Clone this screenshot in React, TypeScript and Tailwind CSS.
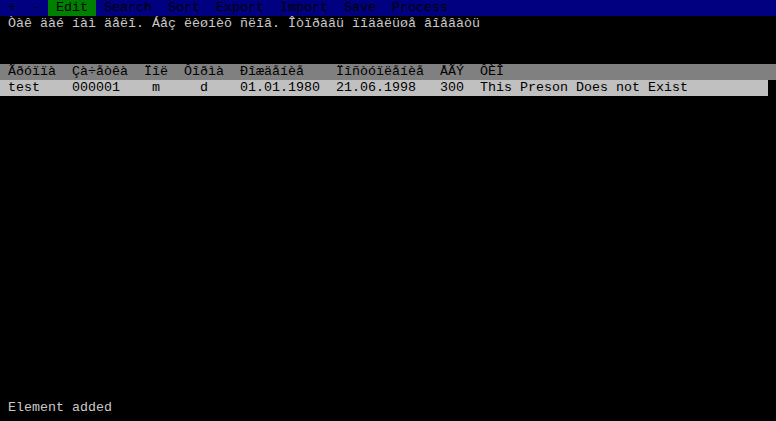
const menu = ["+", "-", "Edit", "Search", "Sort", "Export", "Import", "Save", "Process"];

const columns = [
  { title: "Ãðóïïà", w: "w-[64px]" },
  { title: "Çà÷åòêà", w: "w-[72px]" },
  { title: "Ïîë", w: "w-[40px]" },
  { title: "Ôîðìà", w: "w-[56px]" },
  { title: "Ðîæäåíèå", w: "w-[96px]" },
  { title: "Ïîñòóïëåíèå", w: "w-[104px]" },
  { title: "ÅÃÝ", w: "w-[40px]" },
  { title: "ÔÈÎ", w: "" },
];

const row = [
  { value: "test", pad: "" },
  { value: "000001", pad: "" },
  { value: "m", pad: "pl-2" },
  { value: "d", pad: "pl-4" },
  { value: "01.01.1980", pad: "" },
  { value: "21.06.1998", pad: "" },
  { value: "300", pad: "" },
  { value: "This Preson Does not Exist", pad: "" },
];

export default function App() {
  return (
    <div
      className="w-[776px] h-[421px] bg-black text-[#c8c8c8] text-[13.33px] leading-4 whitespace-pre flex flex-col overflow-hidden"
      style={{ fontFamily: '"Liberation Mono", monospace' }}
    >
      {/* menu bar */}
      <div className="flex h-4 bg-[#000080] text-black">
        {menu.map((m) => (
          <span key={m} className={`px-2 ${m === "Edit" ? "bg-[#008000]" : ""}`}>
            {m}
          </span>
        ))}
      </div>

      <div className="h-4 pl-2">Òàê äàé íàì äåëî. Áåç ëèøíèõ ñëîâ. Îòïðàâü ïîäàëüøå âîåâàòü</div>
      <div className="h-8" />

      {/* table */}
      <div className="flex h-4 bg-[#808080] text-black pl-2">
        {columns.map((c) => (
          <span key={c.title} className={`shrink-0 ${c.w}`}>
            {c.title}
          </span>
        ))}
      </div>
      <div className="flex h-4 w-[768px] bg-[#c0c0c0] text-black pl-2">
        {row.map((v, i) => (
          <span key={i} className={`shrink-0 ${columns[i].w} ${v.pad}`}>
            {v.value}
          </span>
        ))}
      </div>

      <div className="flex-1" />
      <div className="h-4 pl-2 mb-[5px]">Element added</div>
    </div>
  );
}
